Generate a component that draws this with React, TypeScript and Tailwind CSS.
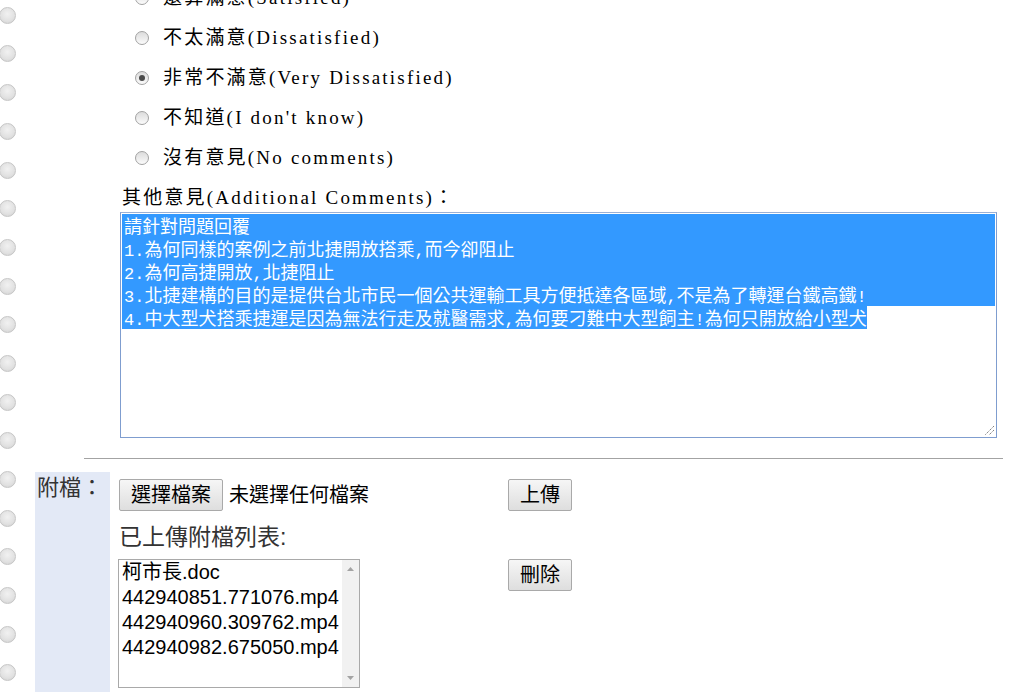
import React from "react";

const serif = "font-['Liberation_Serif','Noto_Sans_CJK_TC',serif]";

function Ring() {
  return (
    <div className="w-[17px] h-[17px] -ml-[1px] shrink-0 rounded-full border border-[#c6c6c6] bg-[radial-gradient(circle_at_50%_40%,#f1f1f1_0%,#e1e1e1_60%,#cdcdcd_100%)]" />
  );
}

function Radio({ checked }: { checked?: boolean }) {
  return (
    <span className="w-[14px] h-[14px] shrink-0 rounded-full border border-[#a2a2a2] bg-[linear-gradient(#dcdcdc,#fbfbfb)] flex items-center justify-center">
      {checked ? <span className="w-[6px] h-[6px] rounded-full bg-[#4a4a4a]" /> : null}
    </span>
  );
}

function Mixed({ text }: { text: string }) {
  const parts = text.split(/([\x00-\x7f]+)/).filter((p) => p.length > 0);
  return (
    <>
      {parts.map((p, i) =>
        /^[\x00-\x7f]+$/.test(p) ? (
          <span key={i} className="font-['Liberation_Mono',monospace] text-[17px]">
            {p}
          </span>
        ) : (
          <span key={i}>{p}</span>
        )
      )}
    </>
  );
}

function Btn({ children, w }: { children: React.ReactNode; w: string }) {
  return (
    <div
      className={`${w} h-[32px] shrink-0 flex items-center justify-center rounded-[2px] border border-[#a9a9a9] bg-[linear-gradient(#f6f6f6,#dedede)] text-[20px] text-black`}
    >
      {children}
    </div>
  );
}

const lines = [
  "請針對問題回覆",
  "1.為何同樣的案例之前北捷開放搭乘,而今卻阻止",
  "2.為何高捷開放,北捷阻止",
  "3.北捷建構的目的是提供台北市民一個公共運輸工具方便抵達各區域,不是為了轉運台鐵高鐵!",
];
const lastLine = "4.中大型犬搭乘捷運是因為無法行走及就醫需求,為何要刁難中大型飼主!為何只開放給小型犬";

const radios = [
  { label: "還算滿意(Satisfied)" },
  { label: "不太滿意(Dissatisfied)" },
  { label: "非常不滿意(Very Dissatisfied)", checked: true },
  { label: "不知道(I don't know)" },
  { label: "沒有意見(No comments)" },
];

const files = ["柯市長.doc", "442940851.771076.mp4", "442940960.309762.mp4", "442940982.675050.mp4"];

export default function App() {
  return (
    <div className="w-[1032px] h-[696px] overflow-hidden bg-white flex">
      <div className="w-[17px] shrink-0 flex flex-col gap-[21.7px] pt-[6.8px]">
        {Array.from({ length: 18 }).map((_, i) => (
          <Ring key={i} />
        ))}
      </div>
      <div className="flex-1 flex flex-col">
        <div className={`-mt-[22px] pl-[118px] flex flex-col ${serif} text-[19px] tracking-[2.2px] text-black`}>
          {radios.map((r, i) => (
            <div key={i} className="h-[40px] flex items-center gap-[14px]">
              <Radio checked={r.checked} />
              <span className="leading-[24px] whitespace-nowrap">{r.label}</span>
            </div>
          ))}
        </div>
        <div className={`pl-[105px] h-[34px] pt-[8px] ${serif} text-[19px] tracking-[2.2px] leading-[24px] text-black whitespace-nowrap`}>
          其他意見(Additional Comments)：
        </div>
        <div className="relative ml-[103px] w-[877px] h-[226px] shrink-0 border border-[#7f9dcf] border-t-[#9ab0d6] p-[1px] font-['Noto_Sans_CJK_TC',sans-serif] text-[18px] leading-[23px] text-white">
          {lines.map((l, i) => (
            <div key={i} className="h-[23px] bg-[#3399ff] pl-[2px] whitespace-nowrap">
              <Mixed text={l} />
            </div>
          ))}
          <div className="h-[23px] whitespace-nowrap">
            <span className="inline-block h-[23px] bg-[#3399ff] pl-[2px]">
              <Mixed text={lastLine} />
            </span>
          </div>
          <svg width="12" height="12" viewBox="0 0 12 12" className="absolute right-[1px] bottom-[1px]">
            <path d="M11 2 L2 11 M11 6 L6 11" stroke="#6e6e6e" strokeWidth="1" strokeDasharray="1.2 1" />
          </svg>
        </div>
        <div className="mt-[20px] ml-[67px] w-[919px] h-0 border-t border-[#a3a3a3]" />
        <div className="mt-[13px] ml-[18px] flex h-[220px] shrink-0 font-['Liberation_Sans','Noto_Sans_CJK_TC',sans-serif]">
          <div className="w-[75px] shrink-0 bg-[#e3e9f6] pl-[2px] pt-[2px] text-[22px] leading-[28px] text-[#333] whitespace-nowrap">
            附檔：
          </div>
          <div className="pl-[9px] pt-[7px] flex flex-col">
            <div className="flex items-center">
              <div className="w-[389px] flex items-center gap-[6px]">
                <Btn w="w-[104px]">選擇檔案</Btn>
                <span className="text-[20px] text-black whitespace-nowrap">未選擇任何檔案</span>
              </div>
              <Btn w="w-[64px]">上傳</Btn>
            </div>
            <div className="h-[48px] pt-[4px] flex items-center text-[23px] text-[#333] whitespace-nowrap">
              已上傳附檔列表:
            </div>
            <div className="flex items-start">
              <div className="-ml-[1px] w-[242px] h-[129px] border border-[#a9a9a9] flex">
                <div className="flex-1 pl-[3px] text-[20px] leading-[25px] text-black">
                  {files.map((f) => (
                    <div key={f} className="whitespace-nowrap">
                      {f}
                    </div>
                  ))}
                </div>
                <div className="w-[17px] bg-[#f1f1f1] flex flex-col justify-between items-center py-[7px]">
                  <svg width="7" height="4" viewBox="0 0 7 4">
                    <path d="M0 4 L3.5 0 L7 4 Z" fill="#a3a3a3" />
                  </svg>
                  <svg width="7" height="4" viewBox="0 0 7 4">
                    <path d="M0 0 L3.5 4 L7 0 Z" fill="#a3a3a3" />
                  </svg>
                </div>
              </div>
              <div className="ml-[148px]">
                <Btn w="w-[64px]">刪除</Btn>
              </div>
            </div>
          </div>
        </div>
      </div>
    </div>
  );
}
